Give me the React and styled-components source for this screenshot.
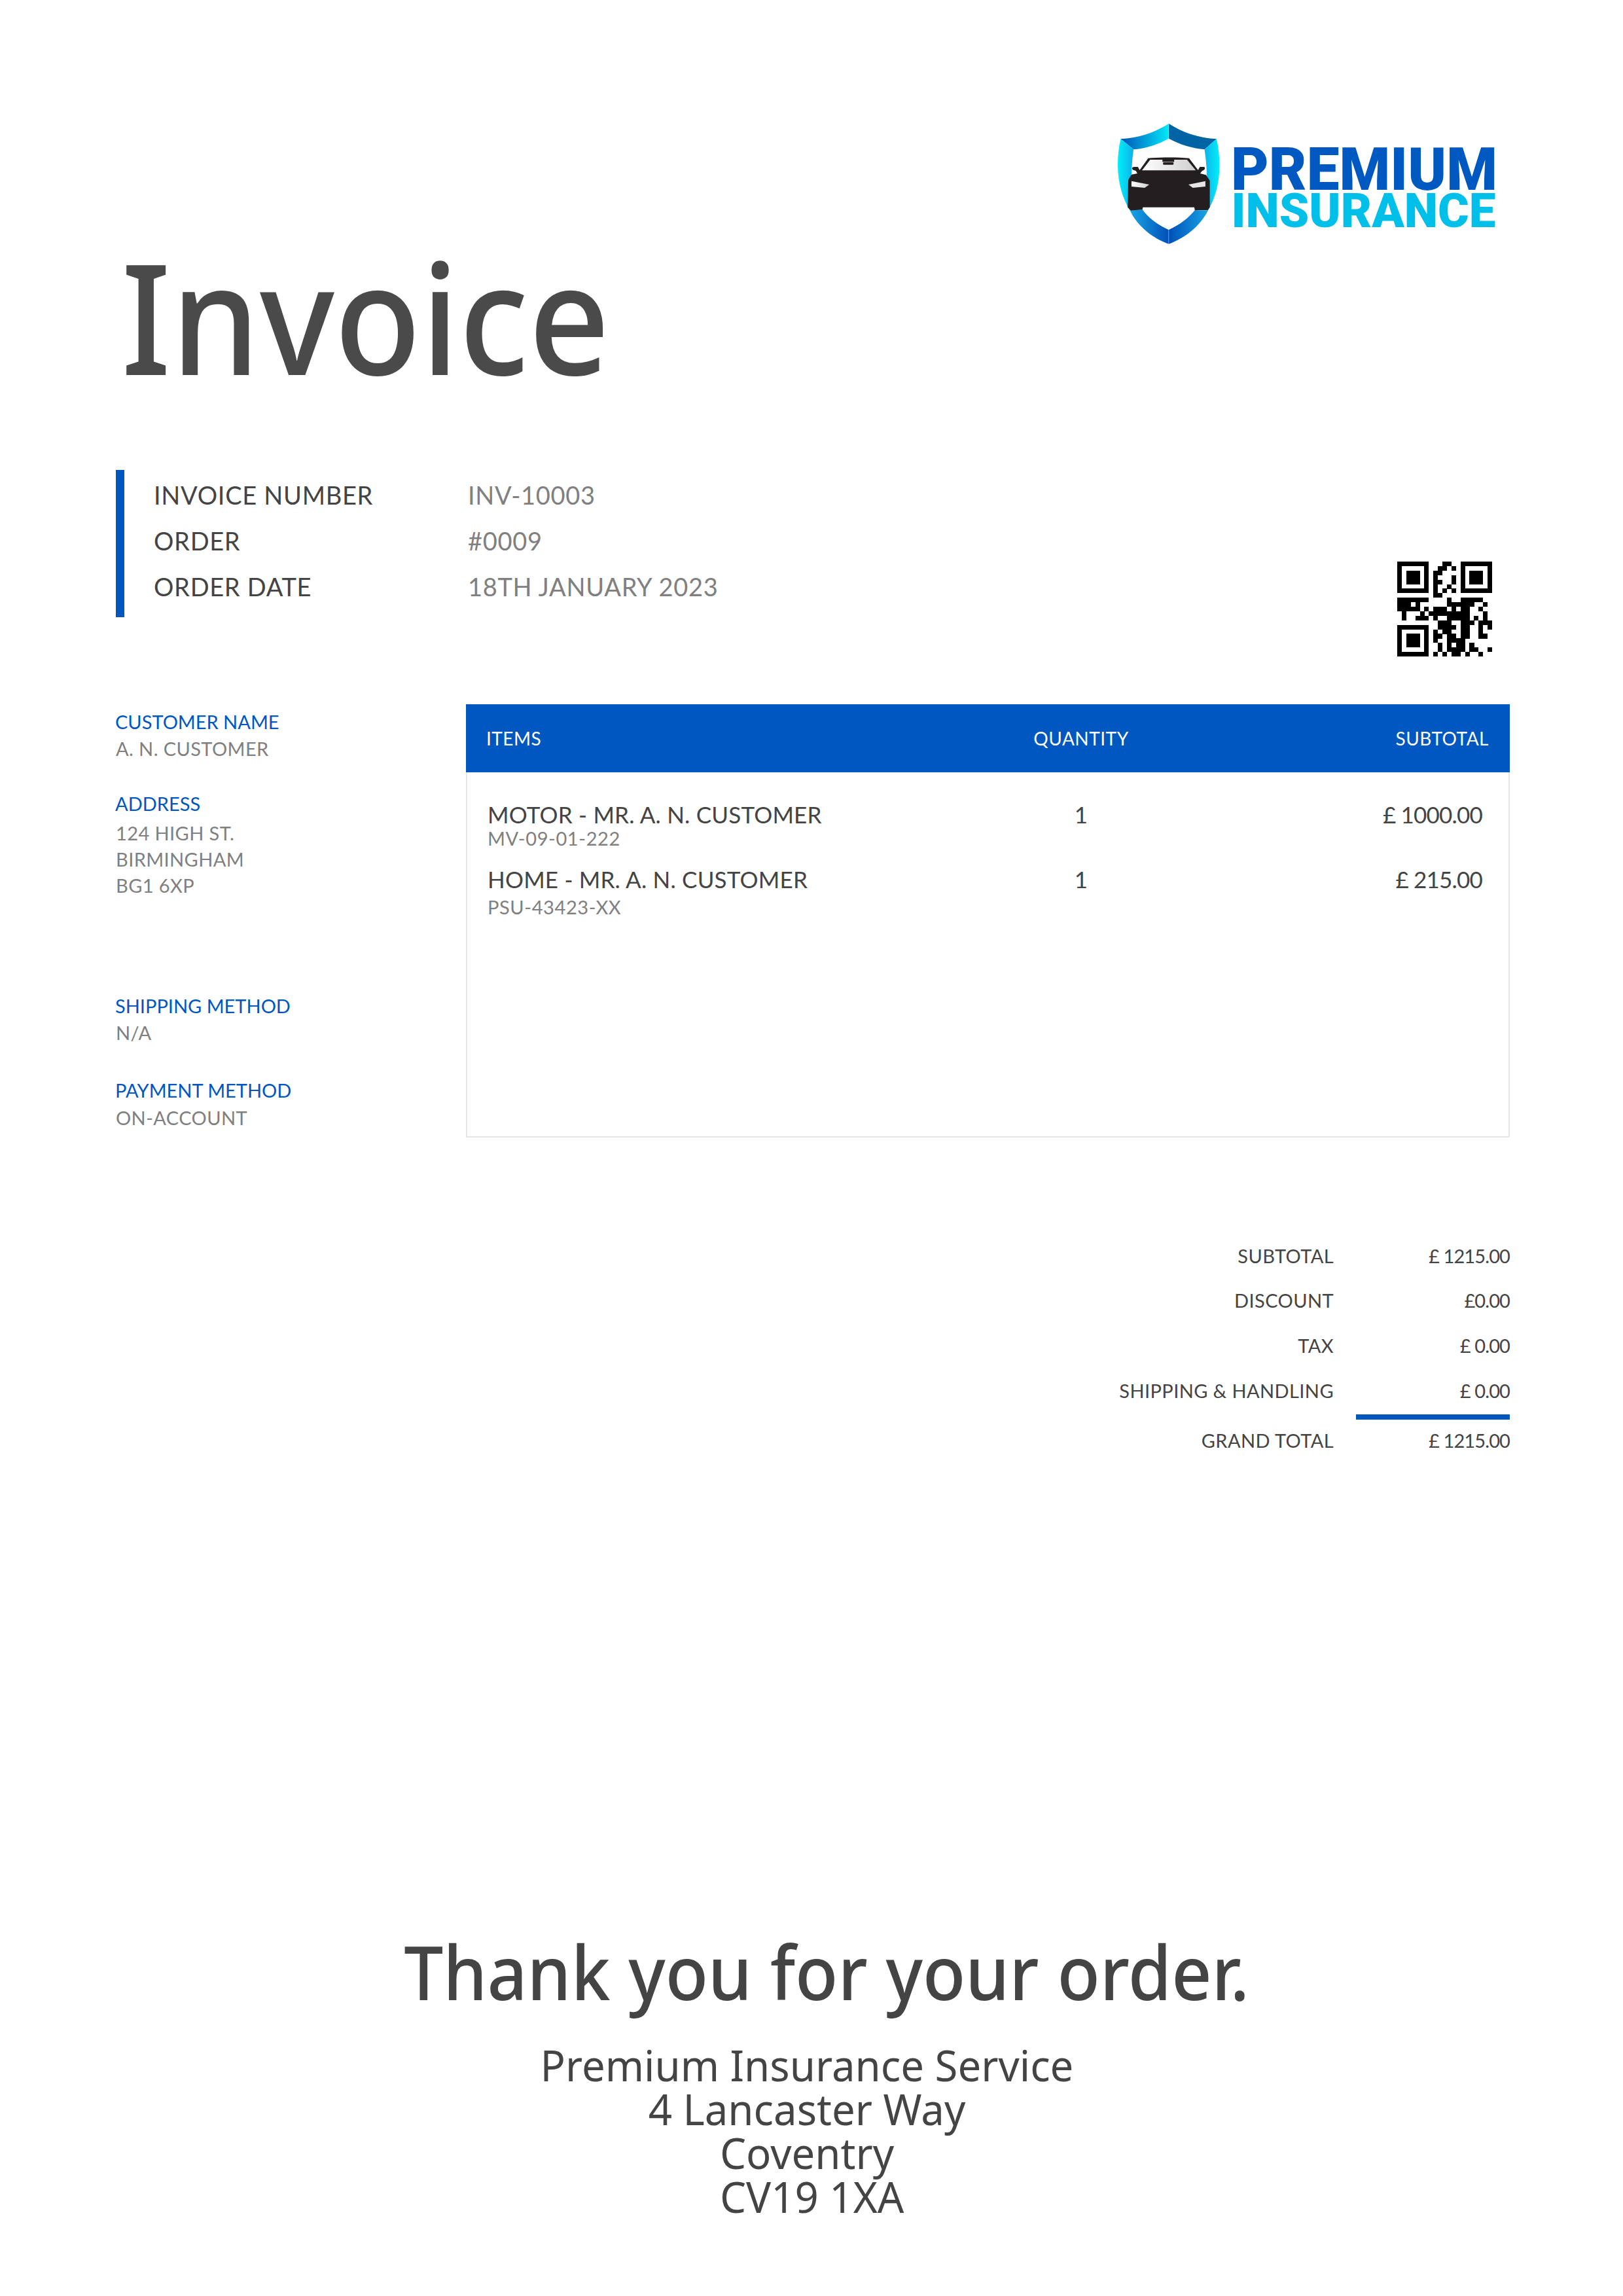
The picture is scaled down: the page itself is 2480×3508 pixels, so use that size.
import React from 'react';
import styled, { createGlobalStyle } from 'styled-components';

const BLUE = '#0057bf';
const DARK = '#444444';
const GREY = '#808080';

const GlobalStyle = createGlobalStyle`
  html, body {
    margin: 0;
    padding: 0;
    background: #ffffff;
  }
`;

const Page = styled.div`
  box-sizing: border-box;
  width: 2480px;
  height: 3508px;
  padding: 160px 173px 0 177px;
  font-family: "Lato", "Liberation Sans", sans-serif;
  color: ${DARK};
  overflow: hidden;
`;

const Header = styled.header`
  display: flex;
  justify-content: space-between;
  align-items: flex-start;
`;

const Title = styled.h1`
  margin: 172px 0 0 0;
  font-family: "Noto Sans", sans-serif;
  font-weight: 500;
  font-size: 235px;
  line-height: 300px;
  color: #4a4a4a;
  transform: translateX(8px) scaleX(0.92);
  transform-origin: left center;
`;

const LogoSvg = styled.svg`
  display: block;
  flex: none;
  margin-right: 5px;
`;

const MetaRow = styled.section`
  display: flex;
  justify-content: space-between;
  height: 285px;
  margin-top: 86px;
`;

const MetaBlock = styled.div`
  box-sizing: border-box;
  height: 225px;
  padding: 3px 0 0 45px;
  border-left: 13px solid ${BLUE};
`;

const MetaLine = styled.div`
  display: grid;
  grid-template-columns: 480px auto;
  font-size: 38px;
  line-height: 70px;
  letter-spacing: 0.7px;
`;

const MetaValue = styled.span`
  color: ${GREY};
`;

const QrSvg = styled.svg`
  display: block;
  align-self: flex-end;
  margin-right: 27px;
`;

const Body = styled.section`
  display: flex;
  margin-top: 73px;
`;

const Sidebar = styled.aside`
  flex: none;
  width: 535px;
`;

const InfoGroup = styled.div`
  margin-top: ${(p) => p.$top}px;
  font-size: 29px;
  line-height: 40px;
`;

const InfoLabel = styled.div`
  margin-left: -1px;
  margin-bottom: ${(p) => p.$gap}px;
  color: ${BLUE};
`;

const InfoValue = styled.div`
  letter-spacing: 0.4px;
  color: ${GREY};
`;

const ItemsBox = styled.div`
  box-sizing: border-box;
  flex: none;
  width: 1595px;
  height: 662px;
  border: 2px solid #e6e6e6;
  border-top: 0;
`;

const ItemsHead = styled.div`
  display: grid;
  grid-template-columns: 759px 300px 1fr;
  align-items: center;
  box-sizing: border-box;
  height: 104px;
  margin: 0 -2px;
  padding: 0 32px 0 31px;
  background: ${BLUE};
  color: #ffffff;
  font-size: 28px;
  letter-spacing: 0.5px;
`;

const ItemRow = styled.div`
  display: grid;
  grid-template-columns: 757px 300px 1fr;
  margin-top: ${(p) => p.$top}px;
  padding: 0 40px 0 31px;
  font-size: 35px;
  line-height: 48px;
  letter-spacing: 0.2px;
`;

const ItemSub = styled.div`
  color: ${GREY};
  font-size: 29px;
  line-height: 32px;
  letter-spacing: 0.6px;
  margin-top: ${(p) => p.$top}px;
`;

const Center = styled.div`
  text-align: center;
`;

const Price = styled.div`
  text-align: right;
  letter-spacing: -0.8px;
`;

const HeadRight = styled.div`
  text-align: right;
`;

const Totals = styled.section`
  margin-top: 161px;
`;

const TotalRow = styled.div`
  display: flex;
  justify-content: flex-end;
  margin-top: ${(p) => p.$top || 0}px;
  font-size: 29px;
  line-height: 40px;
  letter-spacing: 0.4px;
`;

const TotalValue = styled.div`
  width: 235px;
  margin-left: 34px;
  text-align: right;
  letter-spacing: -0.9px;
`;

const TotalRule = styled.div`
  width: 235px;
  height: 8px;
  margin: 16px 0 12px auto;
  background: ${BLUE};
`;

const Thanks = styled.div`
  width: 2172px;
  margin-top: 721px;
  font-family: "Noto Sans", sans-serif;
  font-weight: 500;
  font-size: 115px;
  line-height: 140px;
  text-align: center;
  transform: scaleX(0.93);
`;

const Address = styled.div`
  width: 2112px;
  margin-top: 39px;
  font-family: "Noto Sans", sans-serif;
  font-size: 66px;
  line-height: 67px;
  text-align: center;
  transform: scaleX(0.962);
`;

const AddressLine = styled.div`
  padding-left: ${(p) => p.$indent || 0}px;
`;

const QR_ROWS = [
  '111111100011001111111',
  '100000100110101000001',
  '101110101100001011101',
  '101110101000101011101',
  '101110101100101011101',
  '100000101001001000001',
  '111111101010101111111',
  '000000001100000000000',
  '111111100001001111100',
  '111010000001111110010',
  '111110101110101100100',
  '010001011111111100010',
  '010011101001111101010',
  '000000000111001110111',
  '111111100111101100101',
  '100000101011001100100',
  '101110101101101100110',
  '101110101001111000000',
  '101110100101011010000',
  '100000100101111011001',
  '111111101010110100100',
];

function QrCode() {
  return (
    <QrSvg width="145" height="145" viewBox="0 0 21 21" shapeRendering="crispEdges">
      {QR_ROWS.map((row, y) =>
        row.split('').map((cell, x) =>
          cell === '1' ? <rect key={`${x}-${y}`} x={x} y={y} width="1.02" height="1.02" fill="#000" /> : null
        )
      )}
    </QrSvg>
  );
}

function Logo() {
  return (
    <LogoSvg width="620" height="240" viewBox="20 0 620 240">
      <defs>
        <linearGradient id="topLeft" x1="0" x2="1" y1="0" y2="0">
          <stop offset="0" stopColor="#0052b8" />
          <stop offset="1" stopColor="#00e8f8" />
        </linearGradient>
        <linearGradient id="sideLeft" x1="0" x2="1" y1="0" y2="0">
          <stop offset="0" stopColor="#00f0fa" />
          <stop offset="1" stopColor="#1a8ade" />
        </linearGradient>
        <linearGradient id="sideRight" x1="0" x2="1" y1="0" y2="0">
          <stop offset="0" stopColor="#1a8ade" />
          <stop offset="1" stopColor="#00f0fa" />
        </linearGradient>
        <linearGradient id="bottomLeft" x1="0" x2="1" y1="0" y2="0">
          <stop offset="0" stopColor="#18a4e4" />
          <stop offset="1" stopColor="#0050b8" />
        </linearGradient>
        <linearGradient id="bottomRight" x1="0" x2="1" y1="0" y2="0">
          <stop offset="0" stopColor="#0050b8" />
          <stop offset="1" stopColor="#18a4e4" />
        </linearGradient>
        <linearGradient id="glass" x1="0" x2="1" y1="0" y2="0">
          <stop offset="0" stopColor="#ffffff" />
          <stop offset="1" stopColor="#cfcfcf" />
        </linearGradient>
      </defs>
      <g transform="scale(0.4464 0.3333)">
        <path d="M277 87 C230 128 175 152 113 157 L157 205 C200 200 240 183 277 155 Z" fill="url(#topLeft)" />
        <path d="M278 87 C325 128 380 152 441 157 L400 205 C360 200 315 183 278 155 Z" fill="#0063a3" />
        <path d="M113 157 C92 280 105 400 145 485 L187 480 L187 470 L150 470 C148 380 148 290 157 205 Z" fill="url(#sideLeft)" />
        <path d="M441 157 C462 280 450 400 412 485 L367 483 L367 470 L405 470 C410 380 410 290 400 205 Z" fill="url(#sideRight)" />
        <path d="M145 485 C170 555 220 610 277 638 L277 573 C240 550 208 520 187 480 Z" fill="url(#bottomLeft)" />
        <path d="M278 638 C335 610 385 555 412 485 L367 483 C345 520 315 550 278 573 Z" fill="url(#bottomRight)" />
        <path
          d="M207 245 C250 240 305 240 347 245 L378 300 L384 285 L398 285 C404 288 402 300 392 303 L385 315 L405 322 L418 348 L418 470 L411 483 L367 483 L365 470 L189 470 L187 480 L148 485 L137 470 L139 345 L150 320 L170 315 L165 303 C150 300 148 288 158 285 L172 285 L178 300 Z"
          fill="#231f20"
        />
        <path d="M186 301 L214 252 L340 252 L370 301 Z" fill="url(#glass)" />
        <rect x="256" y="252" width="40" height="10" fill="#231f20" />
        <rect x="258" y="264" width="36" height="11" rx="3" fill="#231f20" />
        <path d="M150 350 L211 366 L195 381 L150 375 Z" fill="url(#glass)" />
        <path d="M403 350 L345 366 L360 381 L403 375 Z" fill="#e6e6e6" />
      </g>
      <text x="219" y="130" fontFamily="Roboto, sans-serif" fontWeight="900" fontSize="91" fill="#0059c1" textLength="407" lengthAdjust="spacingAndGlyphs">PREMIUM</text>
      <text x="219.5" y="187" fontFamily="Roboto, sans-serif" fontWeight="900" fontSize="72" fill="#00bfe8" textLength="404" lengthAdjust="spacingAndGlyphs">INSURANCE</text>
    </LogoSvg>
  );
}

export default function App() {
  return (
    <Page>
      <GlobalStyle />
      <Header>
        <Title>Invoice</Title>
        <Logo />
      </Header>

      <MetaRow>
        <MetaBlock>
          <MetaLine><span>INVOICE NUMBER</span><MetaValue>INV-10003</MetaValue></MetaLine>
          <MetaLine><span>ORDER</span><MetaValue>#0009</MetaValue></MetaLine>
          <MetaLine><span>ORDER DATE</span><MetaValue>18TH JANUARY 2023</MetaValue></MetaLine>
        </MetaBlock>
        <QrCode />
      </MetaRow>

      <Body>
        <Sidebar>
          <InfoGroup $top={7}>
            <InfoLabel $gap={1}>CUSTOMER NAME</InfoLabel>
            <InfoValue>A. N. CUSTOMER</InfoValue>
          </InfoGroup>
          <InfoGroup $top={44}>
            <InfoLabel $gap={5}>ADDRESS</InfoLabel>
            <InfoValue>124 HIGH ST.</InfoValue>
            <InfoValue>BIRMINGHAM</InfoValue>
            <InfoValue>BG1 6XP</InfoValue>
          </InfoGroup>
          <InfoGroup $top={144}>
            <InfoLabel $gap={1}>SHIPPING METHOD</InfoLabel>
            <InfoValue>N/A</InfoValue>
          </InfoGroup>
          <InfoGroup $top={48}>
            <InfoLabel $gap={2}>PAYMENT METHOD</InfoLabel>
            <InfoValue>ON-ACCOUNT</InfoValue>
          </InfoGroup>
        </Sidebar>

        <ItemsBox>
          <ItemsHead>
            <div>ITEMS</div>
            <Center>QUANTITY</Center>
            <HeadRight>SUBTOTAL</HeadRight>
          </ItemsHead>
          <ItemRow $top={40}>
            <div>
              MOTOR - MR. A. N. CUSTOMER
              <ItemSub $top={-3}>MV-09-01-222</ItemSub>
            </div>
            <Center>1</Center>
            <Price>£ 1000.00</Price>
          </ItemRow>
          <ItemRow $top={22}>
            <div>
              HOME - MR. A. N. CUSTOMER
              <ItemSub $top={3}>PSU-43423-XX</ItemSub>
            </div>
            <Center>1</Center>
            <Price>£ 215.00</Price>
          </ItemRow>
        </ItemsBox>
      </Body>

      <Totals>
        <TotalRow><span>SUBTOTAL</span><TotalValue>£ 1215.00</TotalValue></TotalRow>
        <TotalRow $top={28}><span>DISCOUNT</span><TotalValue>£0.00</TotalValue></TotalRow>
        <TotalRow $top={29}><span>TAX</span><TotalValue>£ 0.00</TotalValue></TotalRow>
        <TotalRow $top={29}><span>SHIPPING &amp; HANDLING</span><TotalValue>£ 0.00</TotalValue></TotalRow>
        <TotalRule />
        <TotalRow><span>GRAND TOTAL</span><TotalValue>£ 1215.00</TotalValue></TotalRow>
      </Totals>

      <Thanks>Thank you for your order.</Thanks>
      <Address>
        <AddressLine>Premium Insurance Service</AddressLine>
        <AddressLine>4 Lancaster Way</AddressLine>
        <AddressLine>Coventry</AddressLine>
        <AddressLine $indent={16}>CV19 1XA</AddressLine>
      </Address>
    </Page>
  );
}
